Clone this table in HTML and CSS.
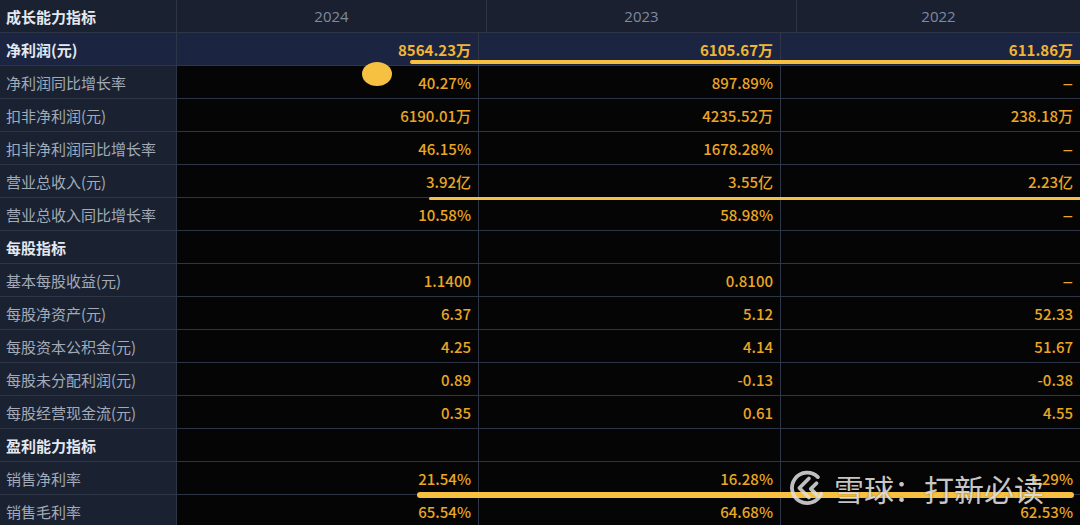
FILE: index.html
```html
<!DOCTYPE html>
<html lang="zh">
<head>
<meta charset="utf-8">
<link rel="stylesheet" href="styles.css">
</head>
<body>
<div class="page">
  <div class="hdr">
    <div class="cell lbl grp">成长能力指标</div>
    <div class="cell yr">2024</div>
    <div class="cell yr">2023</div>
    <div class="cell yr">2022</div>
  </div>
  <div class="row hl">
    <div class="cell lbl grp">净利润(元)</div>
    <div class="cell val b">8564.23万</div>
    <div class="cell val b">6105.67万</div>
    <div class="cell val b">611.86万</div>
  </div>
  <div class="row"><div class="cell lbl">净利润同比增长率</div><div class="cell val">40.27%</div><div class="cell val">897.89%</div><div class="cell val"><span class="dash">–</span></div></div>
  <div class="row"><div class="cell lbl">扣非净利润(元)</div><div class="cell val">6190.01万</div><div class="cell val">4235.52万</div><div class="cell val">238.18万</div></div>
  <div class="row"><div class="cell lbl">扣非净利润同比增长率</div><div class="cell val">46.15%</div><div class="cell val">1678.28%</div><div class="cell val"><span class="dash">–</span></div></div>
  <div class="row"><div class="cell lbl">营业总收入(元)</div><div class="cell val">3.92亿</div><div class="cell val">3.55亿</div><div class="cell val">2.23亿</div></div>
  <div class="row"><div class="cell lbl">营业总收入同比增长率</div><div class="cell val">10.58%</div><div class="cell val">58.98%</div><div class="cell val"><span class="dash">–</span></div></div>
  <div class="row"><div class="cell lbl grp">每股指标</div><div class="cell val"></div><div class="cell val"></div><div class="cell val"></div></div>
  <div class="row"><div class="cell lbl">基本每股收益(元)</div><div class="cell val">1.1400</div><div class="cell val">0.8100</div><div class="cell val"><span class="dash">–</span></div></div>
  <div class="row"><div class="cell lbl">每股净资产(元)</div><div class="cell val">6.37</div><div class="cell val">5.12</div><div class="cell val">52.33</div></div>
  <div class="row"><div class="cell lbl">每股资本公积金(元)</div><div class="cell val">4.25</div><div class="cell val">4.14</div><div class="cell val">51.67</div></div>
  <div class="row"><div class="cell lbl">每股未分配利润(元)</div><div class="cell val">0.89</div><div class="cell val">-0.13</div><div class="cell val">-0.38</div></div>
  <div class="row"><div class="cell lbl">每股经营现金流(元)</div><div class="cell val">0.35</div><div class="cell val">0.61</div><div class="cell val">4.55</div></div>
  <div class="row"><div class="cell lbl grp">盈利能力指标</div><div class="cell val"></div><div class="cell val"></div><div class="cell val"></div></div>
  <div class="row"><div class="cell lbl">销售净利率</div><div class="cell val">21.54%</div><div class="cell val">16.28%</div><div class="cell val">3.29%</div></div>
  <div class="row"><div class="cell lbl">销售毛利率</div><div class="cell val">65.54%</div><div class="cell val">64.68%</div><div class="cell val">62.53%</div></div>

  <div class="mark line1"></div>
  <div class="mark dot"></div>
  <div class="mark line2"></div>
  <div class="mark line3"></div>

  <div class="wm">
    <svg class="wm-logo" viewBox="0 0 40 40" width="38" height="38">
      <path d="M31.5 8.5 A16 16 0 1 0 35 26" fill="none" stroke="currentColor" stroke-width="4" stroke-linecap="round"/>
      <path d="M22 10 L12 20 L22 30" fill="none" stroke="currentColor" stroke-width="4" stroke-linejoin="round" stroke-linecap="round"/>
      <path d="M30 15 L24 21 L30 27" fill="none" stroke="currentColor" stroke-width="4" stroke-linejoin="round" stroke-linecap="round"/>
    </svg>
    <span class="wm-text">雪球：打新必读</span>
  </div>
</div>
</body>
</html>
```
FILE: styles.css
```css
* { box-sizing: border-box; }
html, body { margin: 0; padding: 0; background: #050505; }
body {
  width: 1080px;
  height: 525px;
  overflow: hidden;
  font-family: "Noto Sans CJK SC", "Noto Sans", sans-serif;
}
.page { position: relative; width: 1080px; height: 525px; }

.hdr, .row { display: grid; height: 33px; }
.hdr { grid-template-columns: 177px 310px 310px 1fr; background: #1a2030; }
.row { grid-template-columns: 177px 302px 302px 1fr; background: #050505; }
.row.hl { background: #1b2440; }

.cell {
  border-right: 1px solid #2d3546;
  border-bottom: 1px solid #2d3546;
  display: flex;
  align-items: center;
  font-size: 15px;
  line-height: 1;
  white-space: nowrap;
}
.cell:last-child { border-right: none; }

.lbl {
  background: #1a2232;
  color: #a2aab8;
  padding-left: 6px;
  font-size: 15px;
}
.row.hl .lbl { background: #1b2440; }
.lbl.grp { color: #e4e8ef; font-weight: 700; }

.yr {
  justify-content: center;
  color: #7e8a9f;
  font-size: 15px;
  font-family: "Open Sans", "Noto Sans", sans-serif;
}

.val {
  justify-content: flex-end;
  padding-right: 7px;
  color: #eaa624;
  font-size: 15px;
  font-weight: 500;
}
.val.b { color: #f2b634; font-weight: 700; }
.dash { display: inline-block; transform: scaleX(1.3); transform-origin: right center; }

.mark { position: absolute; background: #f6c040; }
.line1 { left: 410px; top: 60px; width: 670px; height: 4px; border-radius: 2px 0 0 2px; }
.dot { left: 362px; top: 62px; width: 30px; height: 24px; border-radius: 50%; }
.line2 { left: 429px; top: 197px; width: 651px; height: 3px; border-radius: 2px 0 0 2px; }
.line3 { left: 417px; top: 492px; width: 657px; height: 6px; border-radius: 3px; }

.wm {
  position: absolute;
  left: 788px;
  top: 470px;
  height: 36px;
  display: flex;
  align-items: center;
  gap: 8px;
  color: rgba(235, 235, 235, 0.85);
}
.wm-logo { color: rgba(225, 225, 225, 0.85); display: block; }
.wm-text {
  font-size: 30px;
  line-height: 30px;
  font-family: "Noto Sans CJK SC", sans-serif;
  text-shadow: 0 0 2px rgba(0,0,0,0.4);
}
```
